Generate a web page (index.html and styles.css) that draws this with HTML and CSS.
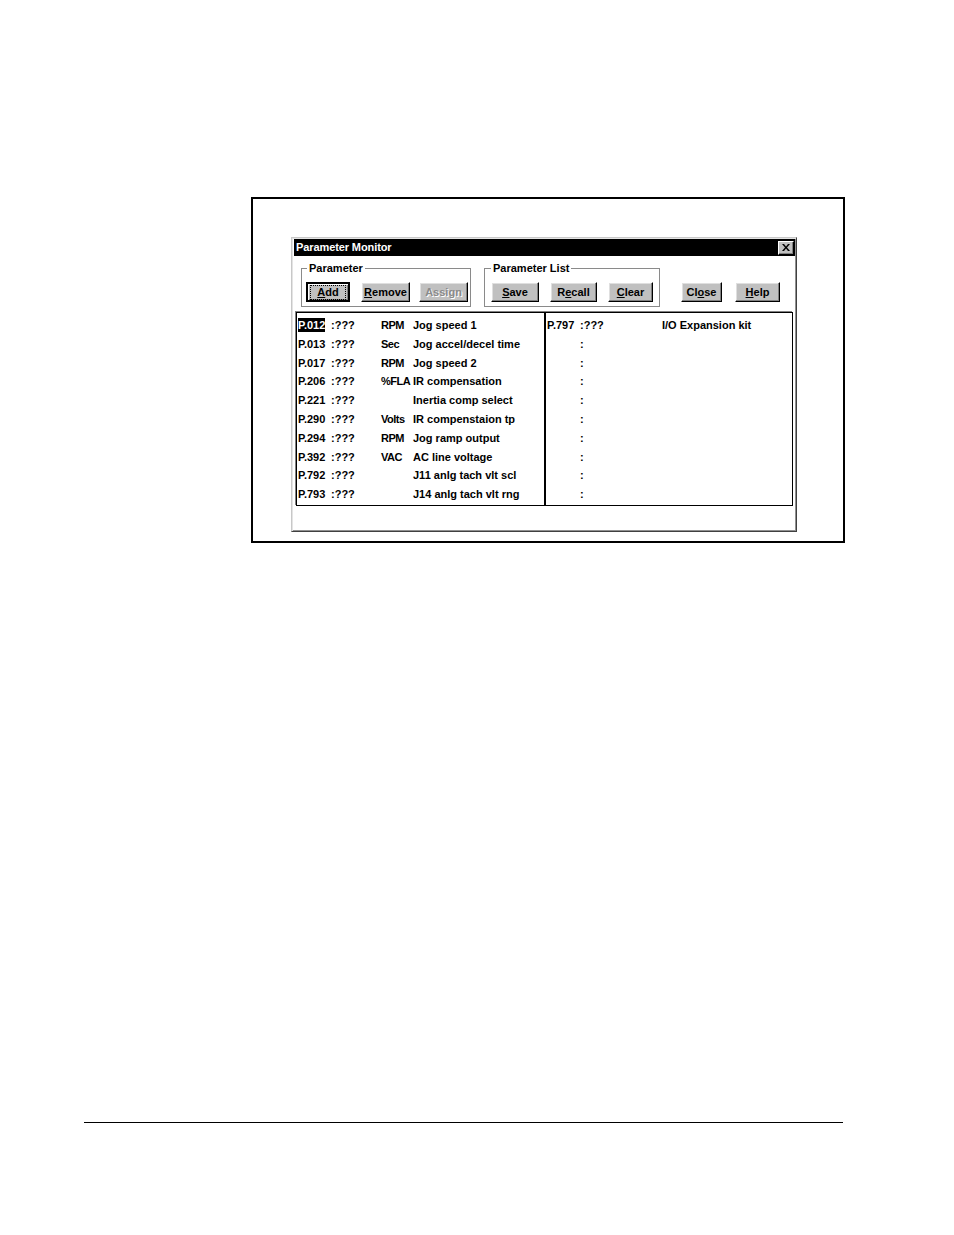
FILE: index.html
```html
<!DOCTYPE html>
<html>
<head>
<meta charset="utf-8">
<title>Parameter Monitor</title>
<link rel="stylesheet" href="styles.css">
</head>
<body>
<div class="page">
  <div class="frame">
    <div class="dialog">
      <div class="titlebar">
        <span class="title">Parameter Monitor</span>
        <span class="xbtn">
          <svg width="8" height="7" viewBox="0 0 8 7"><path d="M0 0h2l2 2.5L6 0h2L5 3.5 8 7H6L4 4.5 2 7H0l3-3.5z" fill="#000"/></svg>
        </span>
      </div>
      <div class="toolbar">
        <fieldset class="group g1">
          <legend>Parameter</legend>
          <div class="btnrow">
            <button class="btn default w-add"><span class="focus"><u>A</u>dd</span></button>
            <button class="btn w-remove"><span class="cap"><u>R</u>emove</span></button>
            <button class="btn disabled w-assign"><span class="cap">Assi<u>g</u>n</span></button>
          </div>
        </fieldset>
        <fieldset class="group g2">
          <legend>Parameter List</legend>
          <div class="btnrow">
            <button class="btn w-save"><span class="cap"><u>S</u>ave</span></button>
            <button class="btn w-recall"><span class="cap">R<u>e</u>call</span></button>
            <button class="btn w-clear"><span class="cap"><u>C</u>lear</span></button>
          </div>
        </fieldset>
        <div class="loose">
          <button class="btn w-close"><span class="cap">Cl<u>o</u>se</span></button>
          <button class="btn w-help"><span class="cap"><u>H</u>elp</span></button>
        </div>
      </div>
      <div class="listbox">
        <div class="panel left">
          <div class="row"><span class="p"><span class="sel">P.012</span></span><span class="v">:???</span><span class="u">RPM</span><span class="d">Jog speed 1</span></div>
          <div class="row"><span class="p">P.013</span><span class="v">:???</span><span class="u">Sec</span><span class="d">Jog accel/decel time</span></div>
          <div class="row"><span class="p">P.017</span><span class="v">:???</span><span class="u">RPM</span><span class="d">Jog speed 2</span></div>
          <div class="row"><span class="p">P.206</span><span class="v">:???</span><span class="u">%FLA</span><span class="d">IR compensation</span></div>
          <div class="row"><span class="p">P.221</span><span class="v">:???</span><span class="u"></span><span class="d">Inertia comp select</span></div>
          <div class="row"><span class="p">P.290</span><span class="v">:???</span><span class="u">Volts</span><span class="d">IR compenstaion tp</span></div>
          <div class="row"><span class="p">P.294</span><span class="v">:???</span><span class="u">RPM</span><span class="d">Jog ramp output</span></div>
          <div class="row"><span class="p">P.392</span><span class="v">:???</span><span class="u">VAC</span><span class="d">AC line voltage</span></div>
          <div class="row"><span class="p">P.792</span><span class="v">:???</span><span class="u"></span><span class="d">J11 anlg tach vlt scl</span></div>
          <div class="row"><span class="p">P.793</span><span class="v">:???</span><span class="u"></span><span class="d">J14 anlg tach vlt rng</span></div>
        </div>
        <div class="panel right">
          <div class="row"><span class="p">P.797</span><span class="v">:???</span><span class="u"></span><span class="d">I/O Expansion kit</span></div>
          <div class="row"><span class="p"></span><span class="v">:</span><span class="u"></span><span class="d"></span></div>
          <div class="row"><span class="p"></span><span class="v">:</span><span class="u"></span><span class="d"></span></div>
          <div class="row"><span class="p"></span><span class="v">:</span><span class="u"></span><span class="d"></span></div>
          <div class="row"><span class="p"></span><span class="v">:</span><span class="u"></span><span class="d"></span></div>
          <div class="row"><span class="p"></span><span class="v">:</span><span class="u"></span><span class="d"></span></div>
          <div class="row"><span class="p"></span><span class="v">:</span><span class="u"></span><span class="d"></span></div>
          <div class="row"><span class="p"></span><span class="v">:</span><span class="u"></span><span class="d"></span></div>
          <div class="row"><span class="p"></span><span class="v">:</span><span class="u"></span><span class="d"></span></div>
          <div class="row"><span class="p"></span><span class="v">:</span><span class="u"></span><span class="d"></span></div>
        </div>
      </div>
    </div>
  </div>
  <div class="rule"></div>
</div>
</body>
</html>
```

FILE: styles.css
```css
html, body {
  margin: 0;
  padding: 0;
  background: #fff;
}

body {
  font-family: "Liberation Sans", Arial, sans-serif;
  font-size: 11px;
  font-weight: bold;
  color: #000;
}

.page {
  padding-top: 197px;
}

.frame {
  box-sizing: border-box;
  margin-left: 251px;
  width: 594px;
  height: 346px;
  border: 2px solid #000;
  padding: 38px 0 0 38px;
}

.dialog {
  box-sizing: border-box;
  width: 506px;
  height: 295px;
  border: 1px solid;
  border-color: #c8c8c8 #404040 #404040 #c8c8c8;
  box-shadow: inset 1px 1px 0 #e4e4e4, inset -1px -1px 0 #909090;
  padding: 1px;
  background: #fff;
}

.titlebar {
  display: flex;
  align-items: center;
  justify-content: space-between;
  height: 17px;
  margin: 0 0 0 1px;
  width: 501px;
  background: #000;
  color: #fff;
}

.title {
  padding-left: 2px;
  line-height: 17px;
  letter-spacing: -0.1px;
}

.xbtn {
  box-sizing: border-box;
  display: flex;
  align-items: center;
  justify-content: center;
  width: 16px;
  height: 14px;
  margin-right: 1px;
  background: #c0c0c0;
  border: 1px solid;
  border-color: #fff #000 #000 #fff;
  box-shadow: inset -1px -1px 0 #808080;
}

.toolbar {
  display: flex;
  align-items: flex-start;
  margin-top: 6px;
  padding-left: 8px;
}

.group {
  box-sizing: border-box;
  margin: 0;
  border: 1px solid #8a8a8a;
  padding: 7px 0 4px 0;
  min-width: 0;
}

.group legend {
  padding: 0 2px;
  line-height: 13px;
  font-size: 11px;
}

.g1 {
  width: 170px;
}

.g1 legend {
  margin-left: 5px;
}

.g1 .btnrow {
  padding-left: 4px;
}

.g2 {
  width: 176px;
  margin-left: 13px;
}

.g2 legend {
  margin-left: 6px;
}

.g2 .btnrow {
  padding-left: 6px;
}

.btnrow {
  display: flex;
}

.loose {
  display: flex;
  margin-top: 20px;
  margin-left: 21px;
}

.btn {
  box-sizing: border-box;
  height: 20px;
  padding: 0;
  margin: 0;
  font-family: "Liberation Sans", Arial, sans-serif;
  font-size: 11px;
  font-weight: bold;
  color: #000;
  background: #c0c0c0;
  border: 1px solid;
  border-color: #fff #000 #000 #fff;
  box-shadow: inset -1px -1px 0 #808080, inset 1px 1px 0 #dfdfdf;
  text-align: center;
  line-height: 12px;
}

.cap {
  display: inline-block;
}

.btn u {
  text-underline-offset: 1px;
}

.btn.default {
  border: 2px solid #000;
  box-shadow: inset 1px 1px 0 #fff, inset -1px -1px 0 #808080;
}

.focus {
  display: inline-block;
  border: 1px dotted #000;
  padding: 1px 6px;
  line-height: 11px;
}

.btn.disabled {
  color: #8a8a8a;
  text-shadow: 1px 1px 0 #fff;
}

.w-add { width: 44px; }
.w-remove { width: 49px; margin-left: 11px; }
.w-assign { width: 49px; margin-left: 9px; }
.w-save { width: 48px; }
.w-recall { width: 47px; margin-left: 11px; }
.w-clear { width: 45px; margin-left: 11px; }
.w-close { width: 41px; }
.w-help { width: 45px; margin-left: 13px; }

.listbox {
  box-sizing: border-box;
  display: flex;
  width: 497px;
  height: 194px;
  margin: 5px 0 0 3px;
  border: 1px solid #000;
  box-shadow: -1px -1px 0 #808080;
  background: #fff;
}

.panel {
  box-sizing: border-box;
  padding-top: 3px;
}

.panel.left {
  width: 249px;
  padding-left: 1px;
  border-right: 2px solid #000;
}

.panel.right {
  flex: 1;
  padding-left: 1px;
}

.row {
  display: grid;
  grid-template-columns: 33px 50px 32px 1fr;
  height: 18.8px;
  line-height: 18.8px;
  white-space: nowrap;
}

.u {
  letter-spacing: -0.5px;
}

.sel {
  background: #000;
  color: #fff;
  padding: 1px 0;
}

.rule {
  margin: 579px 0 0 84px;
  width: 759px;
  height: 1px;
  background: #000;
}
```
